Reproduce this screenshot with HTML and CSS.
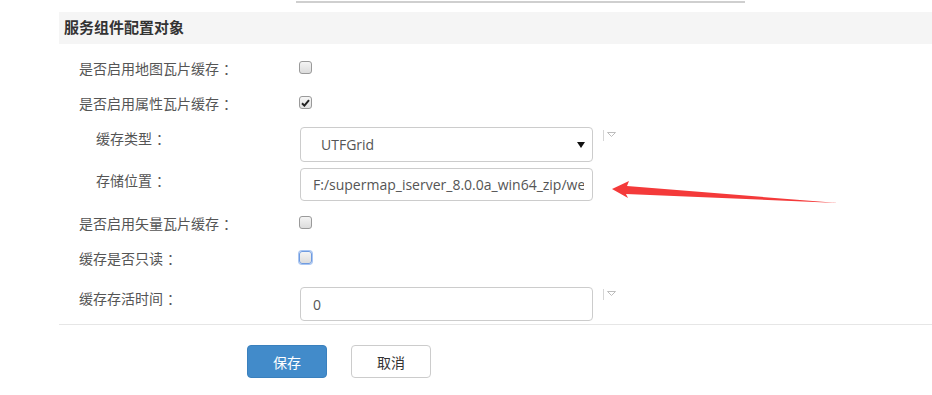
FILE: index.html
```html
<!DOCTYPE html>
<html lang="zh-CN">
<head>
    <meta charset="UTF-8">
    <meta name="viewport" content="width=device-width, initial-scale=1.0">
    <title>服务组件配置对象</title>
    <link rel="stylesheet" href="styles.css">
</head>
<body>
    <div class="top-rule"></div>

    <div class="panel">
        <h2 class="panel-title">服务组件配置对象</h2>

        <div class="form">
            <div class="row row-check">
                <label class="label">是否启用地图瓦片缓存<span class="colon">：</span></label>
                <span class="check"></span>
            </div>
            <div class="row row-check">
                <label class="label">是否启用属性瓦片缓存<span class="colon">：</span></label>
                <span class="check checked">
                    <svg width="9" height="8" viewBox="0 0 9 8"><path d="M1 4.2 L3.4 6.6 L8 1.2" fill="none" stroke="#222" stroke-width="2"/></svg>
                </span>
            </div>
            <div class="row row-select">
                <label class="label sub">缓存类型<span class="colon">：</span></label>
                <div class="control select">
                    <span>UTFGrid</span>
                    <i class="caret"></i>
                </div>
                <span class="hint">
                    <svg width="14" height="12" viewBox="0 0 14 12"><path d="M0.5 0 V11" stroke="#d6d6d6" stroke-width="1"/><path d="M4.5 2.5 H12.5 L8.5 6.5 Z" fill="none" stroke="#bdbdbd" stroke-width="1"/></svg>
                </span>
            </div>
            <div class="row row-path">
                <label class="label sub">存储位置<span class="colon">：</span></label>
                <input class="control field" type="text" readonly value="F:/supermap_iserver_8.0.0a_win64_zip/webapps/iserver/output/sqlite">
            </div>
            <div class="row row-check">
                <label class="label">是否启用矢量瓦片缓存<span class="colon">：</span></label>
                <span class="check"></span>
            </div>
            <div class="row row-check">
                <label class="label">缓存是否只读<span class="colon">：</span></label>
                <span class="check focused"></span>
            </div>
            <div class="row row-time">
                <label class="label">缓存存活时间<span class="colon">：</span></label>
                <input class="control field field-time" type="text" readonly value="0">
                <span class="hint">
                    <svg width="14" height="12" viewBox="0 0 14 12"><path d="M0.5 0 V11" stroke="#d6d6d6" stroke-width="1"/><path d="M4.5 2.5 H12.5 L8.5 6.5 Z" fill="none" stroke="#bdbdbd" stroke-width="1"/></svg>
                </span>
            </div>
        </div>

        <div class="actions">
            <button class="btn btn-primary">保存</button>
            <button class="btn btn-default">取消</button>
        </div>
    </div>

    <!-- annotation arrow drawn over the page -->
    <svg class="arrow" width="932" height="395" viewBox="0 0 932 395">
        <polygon points="612,189 629,181 627,186 838,203 626,194 628,198" fill="#f43a3a"/>
    </svg>
</body>
</html>
```

FILE: styles.css
```css
/* General */
body {
    margin: 0;
    padding: 0;
    font-family: "Noto Sans CJK SC", "Open Sans", sans-serif;
    color: #555;
    background: #fff;
    position: relative;
}

.top-rule {
    margin-left: 296px;
    width: 449px;
    height: 2px;
    margin-top: 1px;
    background-color: #cfcfcf;
}

/* Panel */
.panel {
    margin-left: 59px;
}

.panel-title {
    margin: 9px 0 0 0;
    height: 32px;
    line-height: 30px;
    padding-left: 5px;
    background-color: #f5f5f5;
    font-size: 15px;
    font-weight: bold;
    color: #333;
}

.form {
    margin-top: 6px;
    border-bottom: 1px solid #e6e6e6;
}

/* Rows */
.row {
    display: flex;
    align-items: flex-start;
    padding-left: 20px;
}

.label {
    width: 221px;
    flex-shrink: 0;
    font-size: 14px;
    line-height: 20px;
    color: #555;
}

.label .colon {
    padding-left: 4px;
}

.label.sub {
    width: 204px;
    padding-left: 17px;
}

.row-check {
    height: 35px;
    align-items: center;
}

.row-select {
    height: 45px;
}
.row-select .label { margin-top: 8px; }
.row-select .control { margin-top: 7px; }
.row-select .hint { margin-top: 10px; }

.row-path {
    height: 40px;
}
.row-path .label { margin-top: 5px; }
.row-path .control { margin-top: 3px; }

.row-time {
    height: 49px;
}
.row-time .label { margin-top: 13px; }
.row-time .control { margin-top: 12px; }
.row-time .hint { margin-top: 14px; }

/* Checkboxes */
.check {
    width: 11px;
    height: 11px;
    border: 1px solid #9a9a9a;
    border-radius: 3px;
    background: linear-gradient(#f4f4f4, #dcdcdc);
    display: flex;
    align-items: center;
    justify-content: center;
    margin-left: -1px;
}

.check.checked {
    background: linear-gradient(#f6f6f6, #e2e2e2);
}

.check.focused {
    border-color: #6f9be0;
    box-shadow: 0 0 0 1px #a9c6f2;
}

/* Inputs */
.control {
    box-sizing: border-box;
    width: 293px;
    border: 1px solid #cccccc;
    border-radius: 4px;
    background: #fff;
    font-family: "Open Sans", "Noto Sans CJK SC", sans-serif;
    font-size: 14px;
    color: #555;
}

.select {
    height: 35px;
    display: flex;
    align-items: center;
    justify-content: space-between;
    padding: 0 7px 0 20px;
}

.caret {
    width: 0;
    height: 0;
    border-left: 4px solid transparent;
    border-right: 4px solid transparent;
    border-top: 6px solid #111;
}

.field {
    height: 33px;
    padding: 0 8px 0 12px;
    outline: none;
}

.field-time {
    height: 34px;
}

/* Small dropdown hint next to some fields */
.hint {
    display: flex;
    margin-left: 10px;
}

/* Buttons */
.actions {
    padding: 20px 0 0 188px;
    display: flex;
    gap: 24px;
}

.btn {
    width: 80px;
    height: 33px;
    border-radius: 4px;
    font-family: "Noto Sans CJK SC", sans-serif;
    font-size: 14px;
    cursor: pointer;
}

.btn-primary {
    background-color: #428bca;
    border: 1px solid #3a80bd;
    color: #fff;
}

.btn-default {
    background-color: #fff;
    border: 1px solid #cccccc;
    color: #333;
}

/* Annotation */
.arrow {
    position: absolute;
    left: 0;
    top: 0;
    pointer-events: none;
}
```
